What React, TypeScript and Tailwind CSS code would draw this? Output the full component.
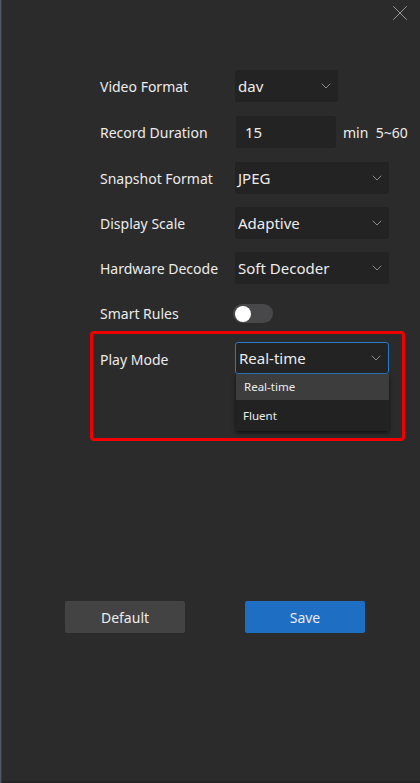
import { X, ChevronDown } from 'lucide-react';

const font = { fontFamily: '"Noto Sans", "Open Sans", sans-serif' };

function Select({ value, wide = true, focused = false }: { value: string; wide?: boolean; focused?: boolean }) {
  return (
    <div
      className={`flex h-8 items-center justify-between rounded-[3px] pl-[3px] pr-[4px] ${wide ? 'w-[154px]' : 'w-[103px]'} ${
        focused ? 'border border-[#2a78c8] bg-[#232323]' : 'bg-[#232323]'
      }`}
    >
      <span className="text-[15px] text-[#ececec]">{value}</span>
      <ChevronDown className="h-4 w-4 text-[#a0a0a0]" strokeWidth={1.25} />
    </div>
  );
}

function Row({ label, children, className = '' }: { label: string; children: React.ReactNode; className?: string }) {
  return (
    <div className={`flex items-center ${className}`}>
      <span className="w-[135px] shrink-0 text-[14px] text-[#ececec]">{label}</span>
      {children}
    </div>
  );
}

export default function App() {
  return (
    <div className="flex h-[783px] w-[420px] bg-[#2b2b2b]" style={font}>
      <div className="w-px bg-[#4e5866]" />
      <div className="w-px bg-[#3a3a3a]" />
      <div className="relative flex flex-1 flex-col border-b-2 border-[#252525]">
        <button className="absolute right-[7px] top-0 text-[#a8a8a8]">
          <X className="h-[26px] w-[26px]" strokeWidth={0.8} />
        </button>

        <div className="flex flex-col pl-[98px] pt-[70px]">
          <Row label="Video Format">
            <Select value="dav" wide={false} />
          </Row>

          <Row label="Record Duration" className="mt-[14px]">
            <div className="ml-px flex h-8 w-[100px] items-center rounded-[3px] bg-[#232323] pl-[9px] text-[15px] text-[#ececec]">
              15
            </div>
            <span className="ml-[7px] text-[14px] text-[#ececec]">min&nbsp;&nbsp;5~60</span>
          </Row>

          <Row label="Snapshot Format" className="mt-[14px]">
            <Select value="JPEG" />
          </Row>

          <Row label="Display Scale" className="mt-[13px]">
            <Select value="Adaptive" />
          </Row>

          <Row label="Hardware Decode" className="mt-[13px]">
            <Select value="Soft Decoder" />
          </Row>

          <Row label="Smart Rules" className="mt-[19px]">
            <div className="-ml-[2px] flex h-[19px] w-[40px] items-center rounded-full bg-[#48484a] pl-[2px]">
              <div className="h-[16px] w-[16px] rounded-full bg-white" />
            </div>
          </Row>
        </div>

        <div className="ml-[88px] mt-[7px] w-[315px] rounded-[4px] border-[3px] border-[#f00000] pb-[7px] pl-[7px] pt-[8px]">
          <div className="flex items-start">
            <span className="mt-[7px] w-[135px] shrink-0 text-[14px] text-[#ececec]">Play Mode</span>
            <div className="flex flex-col">
              <Select value="Real-time" focused />
              <div className="ml-px w-[153px] bg-[#222222] shadow-[0_2px_4px_rgba(0,0,0,0.6)]">
                <div className="flex h-[26px] items-center bg-[#3d3d3d] pl-[8px] text-[11.5px] text-[#ececec]">Real-time</div>
                <div className="flex h-[31px] items-center pl-[7px] text-[11.5px] text-[#ececec]">Fluent</div>
              </div>
            </div>
          </div>
        </div>

        <div className="mt-[160px] flex gap-[60px] pl-[63px]">
          <button className="h-8 w-[120px] rounded-[2px] bg-[#434343] text-[14px] text-[#ececec]">Default</button>
          <button className="h-8 w-[120px] rounded-[2px] bg-[#1e6ec4] text-[14px] text-[#ececec]">Save</button>
        </div>
      </div>
    </div>
  );
}
